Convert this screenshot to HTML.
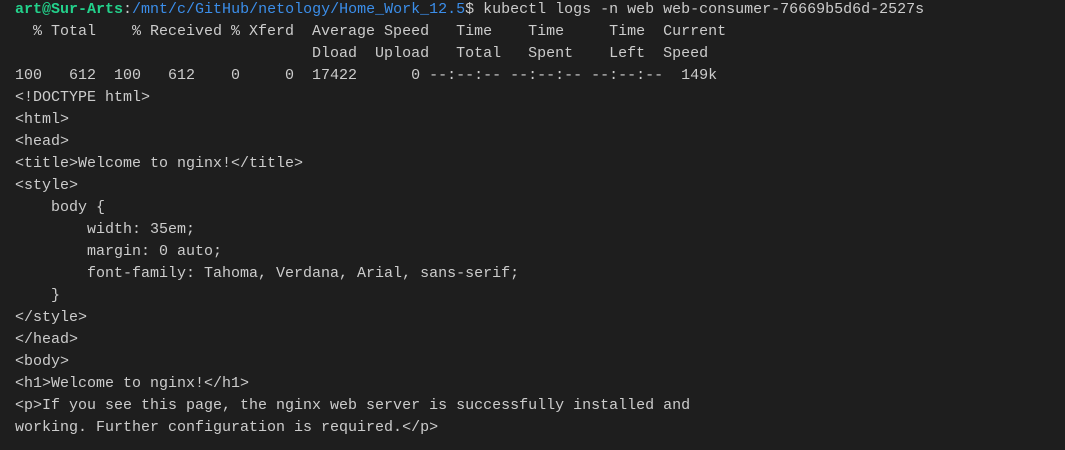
<!DOCTYPE html>
<html><head><style>
html,body{margin:0;padding:0;background:#1e1e1e;width:1065px;height:450px;overflow:hidden}
pre{margin:0;padding:0 0 0 15px;font-family:"Liberation Mono",monospace;font-size:15px;line-height:22px;color:#cccccc;position:relative;top:-1px;white-space:pre}
.g{color:#23d18b;font-weight:bold}.b{color:#3b8eea}
</style></head><body><pre><span class="g">art@Sur-Arts</span>:<span class="b">/mnt/c/GitHub/netology/Home_Work_12.5</span>$ kubectl logs -n web web-consumer-76669b5d6d-2527s
  % Total    % Received % Xferd  Average Speed   Time    Time     Time  Current
                                 Dload  Upload   Total   Spent    Left  Speed
100   612  100   612    0     0  17422      0 --:--:-- --:--:-- --:--:--  149k
&lt;!DOCTYPE html&gt;
&lt;html&gt;
&lt;head&gt;
&lt;title&gt;Welcome to nginx!&lt;/title&gt;
&lt;style&gt;
    body {
        width: 35em;
        margin: 0 auto;
        font-family: Tahoma, Verdana, Arial, sans-serif;
    }
&lt;/style&gt;
&lt;/head&gt;
&lt;body&gt;
&lt;h1&gt;Welcome to nginx!&lt;/h1&gt;
&lt;p&gt;If you see this page, the nginx web server is successfully installed and
working. Further configuration is required.&lt;/p&gt;
</pre></body></html>
